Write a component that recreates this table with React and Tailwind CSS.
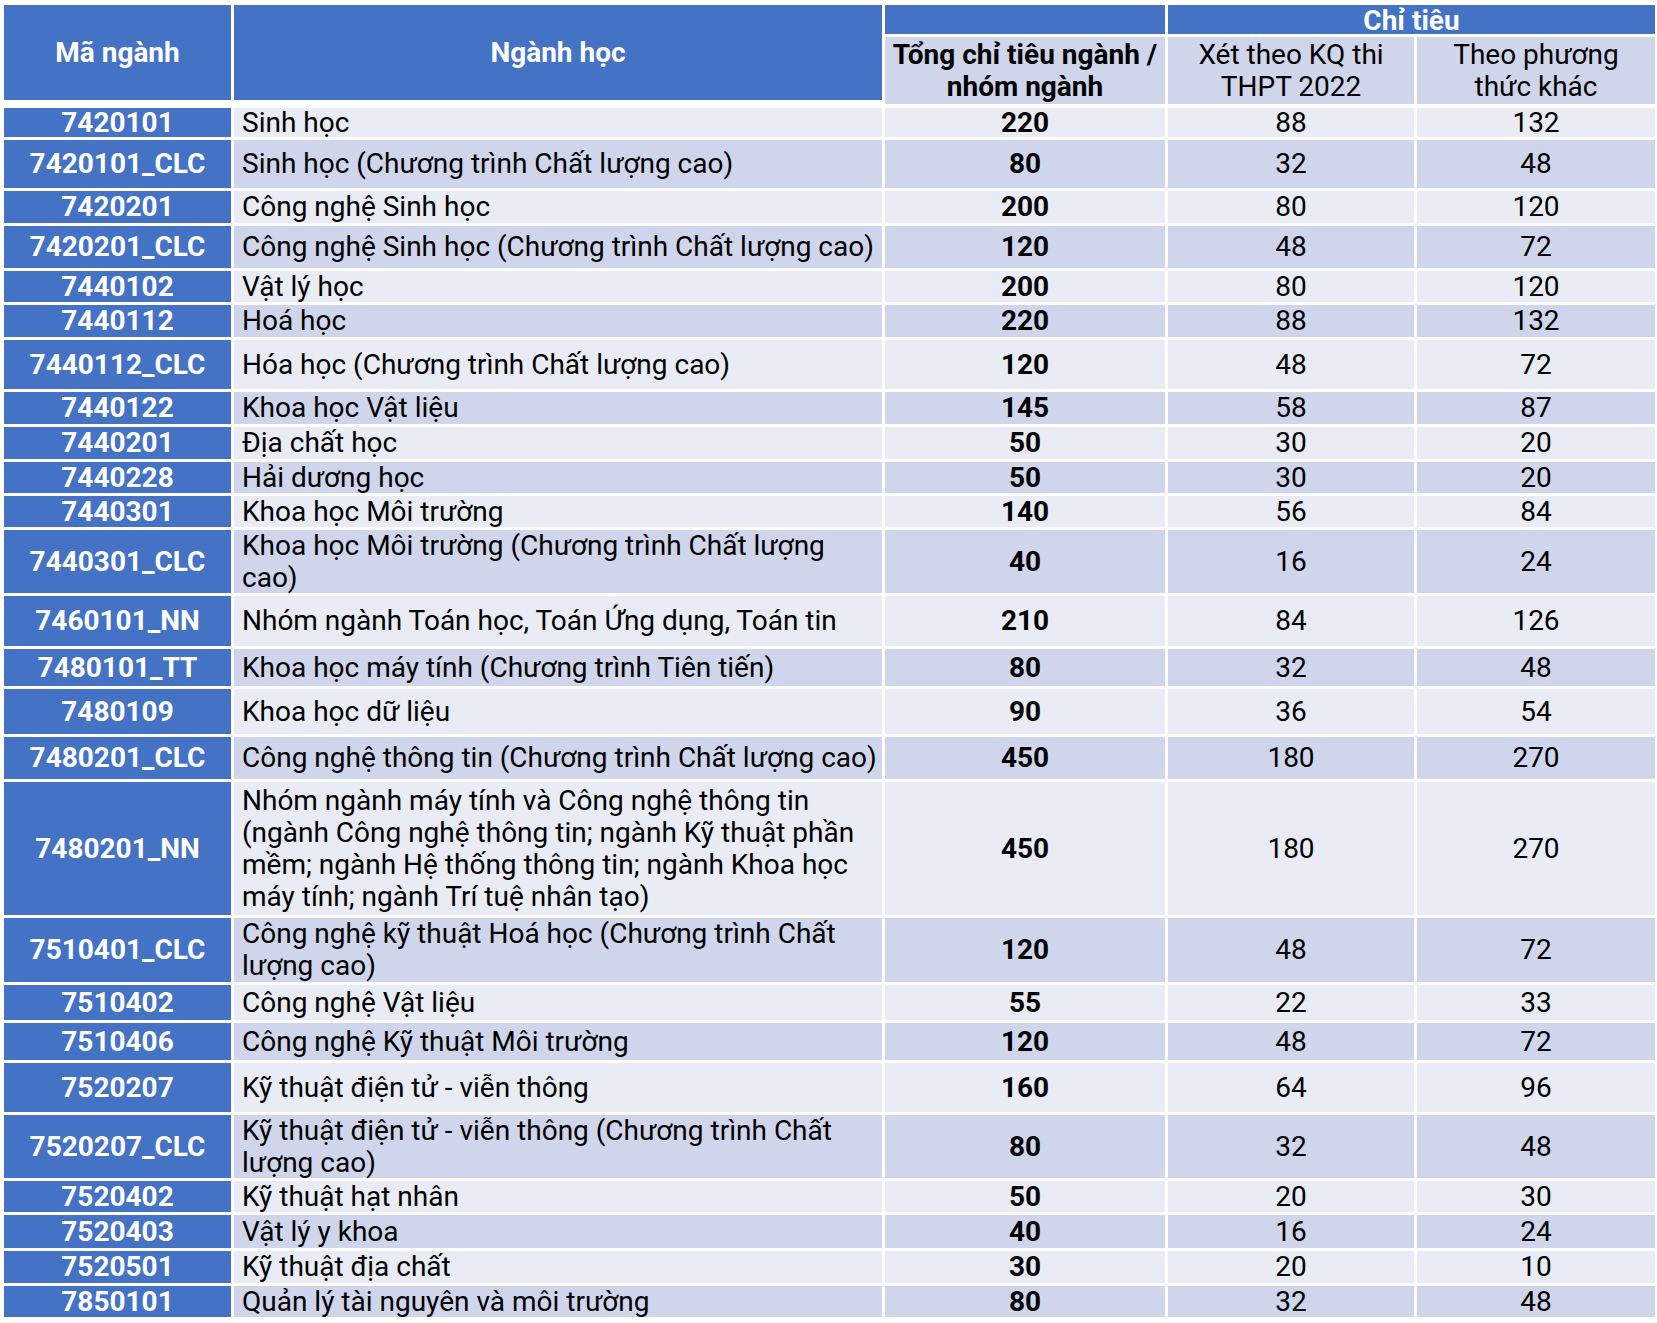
import React from 'react';

// Bảng chỉ tiêu tuyển sinh theo ngành
const rows = [
    { code: '7420101', name: 'Sinh học', total: 220, thpt: 88, other: 132, h: 'h-[29px]' },
    { code: '7420101_CLC', name: 'Sinh học (Chương trình Chất lượng cao)', total: 80, thpt: 32, other: 48, h: 'h-[48px]' },
    { code: '7420201', name: 'Công nghệ Sinh học', total: 200, thpt: 80, other: 120, h: 'h-[32px]' },
    { code: '7420201_CLC', name: 'Công nghệ Sinh học (Chương trình Chất lượng cao)', total: 120, thpt: 48, other: 72, h: 'h-[42px]' },
    { code: '7440102', name: 'Vật lý học', total: 200, thpt: 80, other: 120, h: 'h-[31px]' },
    { code: '7440112', name: 'Hoá học', total: 220, thpt: 88, other: 132, h: 'h-[32px]' },
    { code: '7440112_CLC', name: 'Hóa học (Chương trình Chất lượng cao)', total: 120, thpt: 48, other: 72, h: 'h-[49px]' },
    { code: '7440122', name: 'Khoa học Vật liệu', total: 145, thpt: 58, other: 87, h: 'h-[32px]' },
    { code: '7440201', name: 'Địa chất học', total: 50, thpt: 30, other: 20, h: 'h-[32px]' },
    { code: '7440228', name: 'Hải dương học', total: 50, thpt: 30, other: 20, h: 'h-[31px]' },
    { code: '7440301', name: 'Khoa học Môi trường', total: 140, thpt: 56, other: 84, h: 'h-[31px]' },
    { code: '7440301_CLC', name: 'Khoa học Môi trường (Chương trình Chất lượng cao)', total: 40, thpt: 16, other: 24, h: 'h-[63px]' },
    { code: '7460101_NN', name: 'Nhóm ngành Toán học, Toán Ứng dụng, Toán tin', total: 210, thpt: 84, other: 126, h: 'h-[50px]' },
    { code: '7480101_TT', name: 'Khoa học máy tính (Chương trình Tiên tiến)', total: 80, thpt: 32, other: 48, h: 'h-[37px]' },
    { code: '7480109', name: 'Khoa học dữ liệu', total: 90, thpt: 36, other: 54, h: 'h-[45px]' },
    { code: '7480201_CLC', name: 'Công nghệ thông tin (Chương trình Chất lượng cao)', total: 450, thpt: 180, other: 270, h: 'h-[42px]' },
    { code: '7480201_NN', name: 'Nhóm ngành máy tính và Công nghệ thông tin (ngành Công nghệ thông tin; ngành Kỹ thuật phần mềm; ngành Hệ thống thông tin; ngành Khoa học máy tính; ngành Trí tuệ nhân tạo)', total: 450, thpt: 180, other: 270, h: 'h-[133px]' },
    { code: '7510401_CLC', name: 'Công nghệ kỹ thuật Hoá học (Chương trình Chất lượng cao)', total: 120, thpt: 48, other: 72, h: 'h-[64px]' },
    { code: '7510402', name: 'Công nghệ Vật liệu', total: 55, thpt: 22, other: 33, h: 'h-[35px]' },
    { code: '7510406', name: 'Công nghệ Kỹ thuật Môi trường', total: 120, thpt: 48, other: 72, h: 'h-[37px]' },
    { code: '7520207', name: 'Kỹ thuật điện tử - viễn thông', total: 160, thpt: 64, other: 96, h: 'h-[49px]' },
    { code: '7520207_CLC', name: 'Kỹ thuật điện tử - viễn thông (Chương trình Chất lượng cao)', total: 80, thpt: 32, other: 48, h: 'h-[63px]' },
    { code: '7520402', name: 'Kỹ thuật hạt nhân', total: 50, thpt: 20, other: 30, h: 'h-[31px]' },
    { code: '7520403', name: 'Vật lý y khoa', total: 40, thpt: 16, other: 24, h: 'h-[33px]' },
    { code: '7520501', name: 'Kỹ thuật địa chất', total: 30, thpt: 20, other: 10, h: 'h-[32px]' },
    { code: '7850101', name: 'Quản lý tài nguyên và môi trường', total: 80, thpt: 32, other: 48, h: 'h-[31px]' },
];

export default function App() {
    return (
        <div
            className="w-[1657px] h-[1323px] bg-white pt-[5px] pl-[4px] text-black text-[28px] leading-[34px]"
            style={{ fontFamily: 'Roboto, "Noto Sans", sans-serif' }}
        >
            {/* Header */}
            <div className="flex gap-x-[3px] h-[99px]">
                <div className="w-[227px] h-[95px] bg-[#4472c4] text-white font-bold flex items-center justify-center">
                    Mã ngành
                </div>
                <div className="w-[648px] h-[95px] bg-[#4472c4] text-white font-bold flex items-center justify-center">
                    Ngành học
                </div>
                <div className="flex flex-col gap-y-[3px] w-[770px]">
                    <div className="flex gap-x-[3px] h-[29px]">
                        <div className="w-[280px] bg-[#4472c4]"></div>
                        <div className="flex-1 bg-[#4472c4] text-white font-bold flex items-center justify-center leading-[29px] pt-[2px]">
                            Chỉ tiêu
                        </div>
                    </div>
                    <div className="flex gap-x-[3px] flex-1">
                        <div className="w-[280px] bg-[#cfd5ea] font-bold flex items-center justify-center text-center leading-[32px]">
                            Tổng chỉ tiêu ngành / nhóm ngành
                        </div>
                        <div className="w-[246px] bg-[#cfd5ea] flex items-center justify-center text-center leading-[32px] px-6">
                            Xét theo KQ thi THPT 2022
                        </div>
                        <div className="flex-1 bg-[#cfd5ea] flex items-center justify-center text-center leading-[32px] px-8">
                            Theo phương thức khác
                        </div>
                    </div>
                </div>
            </div>

            {/* Body */}
            <div className="flex flex-col gap-y-[3px] mt-[4px]">
                {rows.map((r, i) => {
                    const bg = i % 2 === 0 ? 'bg-[#e9ebf5]' : 'bg-[#cfd5ea]';
                    return (
                        <div key={r.code} className={`flex gap-x-[3px] ${r.h}`}>
                            <div className="w-[227px] shrink-0 bg-[#4472c4] text-white font-bold flex items-center justify-center">
                                {r.code}
                            </div>
                            <div className={`w-[648px] shrink-0 ${bg} flex items-center pl-[8px] pr-[2px] leading-[32px]`}>
                                <span>{r.name}</span>
                            </div>
                            <div className={`w-[280px] shrink-0 ${bg} font-bold flex items-center justify-center`}>{r.total}</div>
                            <div className={`w-[246px] shrink-0 ${bg} flex items-center justify-center`}>{r.thpt}</div>
                            <div className={`w-[238px] shrink-0 ${bg} flex items-center justify-center`}>{r.other}</div>
                        </div>
                    );
                })}
            </div>
        </div>
    );
}
